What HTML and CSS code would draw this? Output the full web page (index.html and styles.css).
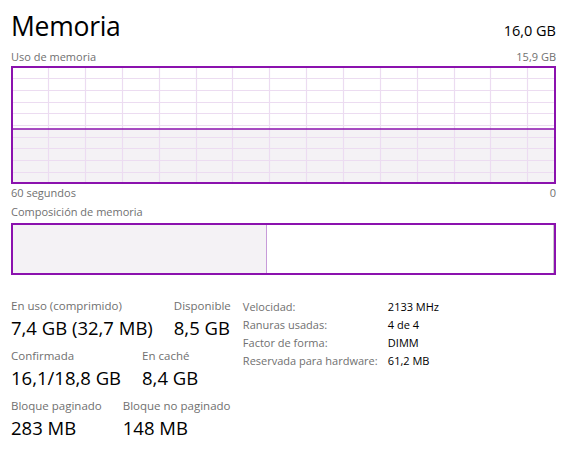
FILE: index.html
```html
<!DOCTYPE html>
<html lang="es">
<head>
<meta charset="utf-8">
<title>Memoria</title>
<link rel="stylesheet" href="styles.css">
</head>
<body>
<div class="page">
  <div class="header">
    <div class="title">Memoria</div>
    <div class="total">16,0 GB</div>
  </div>
  <div class="caption-row graph-caption">
    <span>Uso de memoria</span>
    <span>15,9 GB</span>
  </div>
  <div class="graph">
    <svg class="grid" viewBox="0 0 541 114" preserveAspectRatio="none" width="541" height="114">
      <rect x="0" y="61" width="541" height="53" fill="#f4f2f5"/>
      <g stroke="#ecdcf1" stroke-width="1.2">
        <line x1="35.5" y1="0" x2="35.5" y2="114"/>
        <line x1="72.5" y1="0" x2="72.5" y2="114"/>
        <line x1="109.5" y1="0" x2="109.5" y2="114"/>
        <line x1="146.5" y1="0" x2="146.5" y2="114"/>
        <line x1="183.5" y1="0" x2="183.5" y2="114"/>
        <line x1="219.5" y1="0" x2="219.5" y2="114"/>
        <line x1="256.5" y1="0" x2="256.5" y2="114"/>
        <line x1="293.5" y1="0" x2="293.5" y2="114"/>
        <line x1="330.5" y1="0" x2="330.5" y2="114"/>
        <line x1="367.5" y1="0" x2="367.5" y2="114"/>
        <line x1="404.5" y1="0" x2="404.5" y2="114"/>
        <line x1="441.5" y1="0" x2="441.5" y2="114"/>
        <line x1="477.5" y1="0" x2="477.5" y2="114"/>
        <line x1="514.5" y1="0" x2="514.5" y2="114"/>
        <line x1="0" y1="10.5" x2="541" y2="10.5"/>
        <line x1="0" y1="22.5" x2="541" y2="22.5"/>
        <line x1="0" y1="34.5" x2="541" y2="34.5"/>
        <line x1="0" y1="45.5" x2="541" y2="45.5"/>
        <line x1="0" y1="57.5" x2="541" y2="57.5"/>
        <line x1="0" y1="69.5" x2="541" y2="69.5"/>
        <line x1="0" y1="80.5" x2="541" y2="80.5"/>
        <line x1="0" y1="92.5" x2="541" y2="92.5"/>
        <line x1="0" y1="104.5" x2="541" y2="104.5"/>
      </g>
      <line x1="0" y1="61" x2="541" y2="61" stroke="#8b12ae" stroke-width="1.5"/>
    </svg>
  </div>
  <div class="caption-row axis">
    <span>60 segundos</span>
    <span>0</span>
  </div>
  <div class="caption-row comp-caption">
    <span>Composición de memoria</span>
  </div>
  <div class="comp">
    <div class="comp-used" style="width:253px"></div>
    <div class="comp-free"></div>
    <div class="comp-standby"></div>
  </div>
  <div class="stats">
    <div class="stat-cols">
      <div class="stat-row">
        <div class="stat"><div class="label">En uso (comprimido)</div><div class="value">7,4 GB (32,7 MB)</div></div>
        <div class="stat"><div class="label">Disponible</div><div class="value">8,5 GB</div></div>
      </div>
      <div class="stat-row">
        <div class="stat"><div class="label">Confirmada</div><div class="value">16,1/18,8 GB</div></div>
        <div class="stat"><div class="label">En caché</div><div class="value">8,4 GB</div></div>
      </div>
      <div class="stat-row">
        <div class="stat"><div class="label">Bloque paginado</div><div class="value">283 MB</div></div>
        <div class="stat"><div class="label">Bloque no paginado</div><div class="value">148 MB</div></div>
      </div>
    </div>
    <div class="details">
      <span class="dlabel">Velocidad:</span><span class="dvalue">2133 MHz</span>
      <span class="dlabel">Ranuras usadas:</span><span class="dvalue">4 de 4</span>
      <span class="dlabel">Factor de forma:</span><span class="dvalue">DIMM</span>
      <span class="dlabel">Reservada para hardware:</span><span class="dvalue">61,2 MB</span>
    </div>
  </div>
</div>
</body>
</html>
```
FILE: styles.css
```css
html, body {
  margin: 0;
  padding: 0;
  background: #ffffff;
}
body {
  font-family: "Segoe UI", "Open Sans", "Noto Sans", sans-serif;
  color: #000000;
}
.page {
  padding: 8px 14px 0 11px;
  width: 545px;
}
.header {
  display: flex;
  justify-content: space-between;
  align-items: baseline;
}
.title {
  font-size: 26.5px;
  line-height: 36px;
  letter-spacing: -0.01em;
}
.total {
  font-size: 14.5px;
  line-height: 20px;
}
.caption-row {
  display: flex;
  justify-content: space-between;
  font-size: 11px;
  line-height: 16px;
  color: #707070;
}
.graph-caption {
  margin-top: 5px;
  margin-bottom: 1px;
}
.graph {
  border: 2px solid #8b12ae;
  height: 114px;
  width: 541px;
}
.grid {
  display: block;
}
.axis {
  margin-top: 1px;
}
.comp-caption {
  margin-top: 3px;
  margin-bottom: 3px;
}
.comp {
  display: flex;
  border: 2px solid #8b12ae;
  height: 48px;
  width: 541px;
}
.comp-used {
  background: #f4f2f5;
  border-right: 1px solid #c79bd9;
}
.comp-free {
  flex: 1;
}
.comp-standby {
  width: 1px;
  background: #c8c8c8;
}
.stats {
  display: flex;
  gap: 12px;
  margin-top: 23px;
}
.stat-cols {
  display: flex;
  flex-direction: column;
  gap: 8px;
}
.stat-row {
  display: flex;
  gap: 21px;
}
.label {
  font-size: 11.5px;
  line-height: 16px;
  color: #707070;
}
.value {
  font-size: 18.5px;
  line-height: 24px;
  margin-top: 2px;
}
.details {
  display: grid;
  grid-template-columns: 145px auto;
  grid-auto-rows: 18px;
  align-content: start;
  font-size: 11px;
  line-height: 18px;
  margin-top: 0;
}
.dlabel {
  color: #707070;
}
.dvalue {
  color: #000000;
}
```
